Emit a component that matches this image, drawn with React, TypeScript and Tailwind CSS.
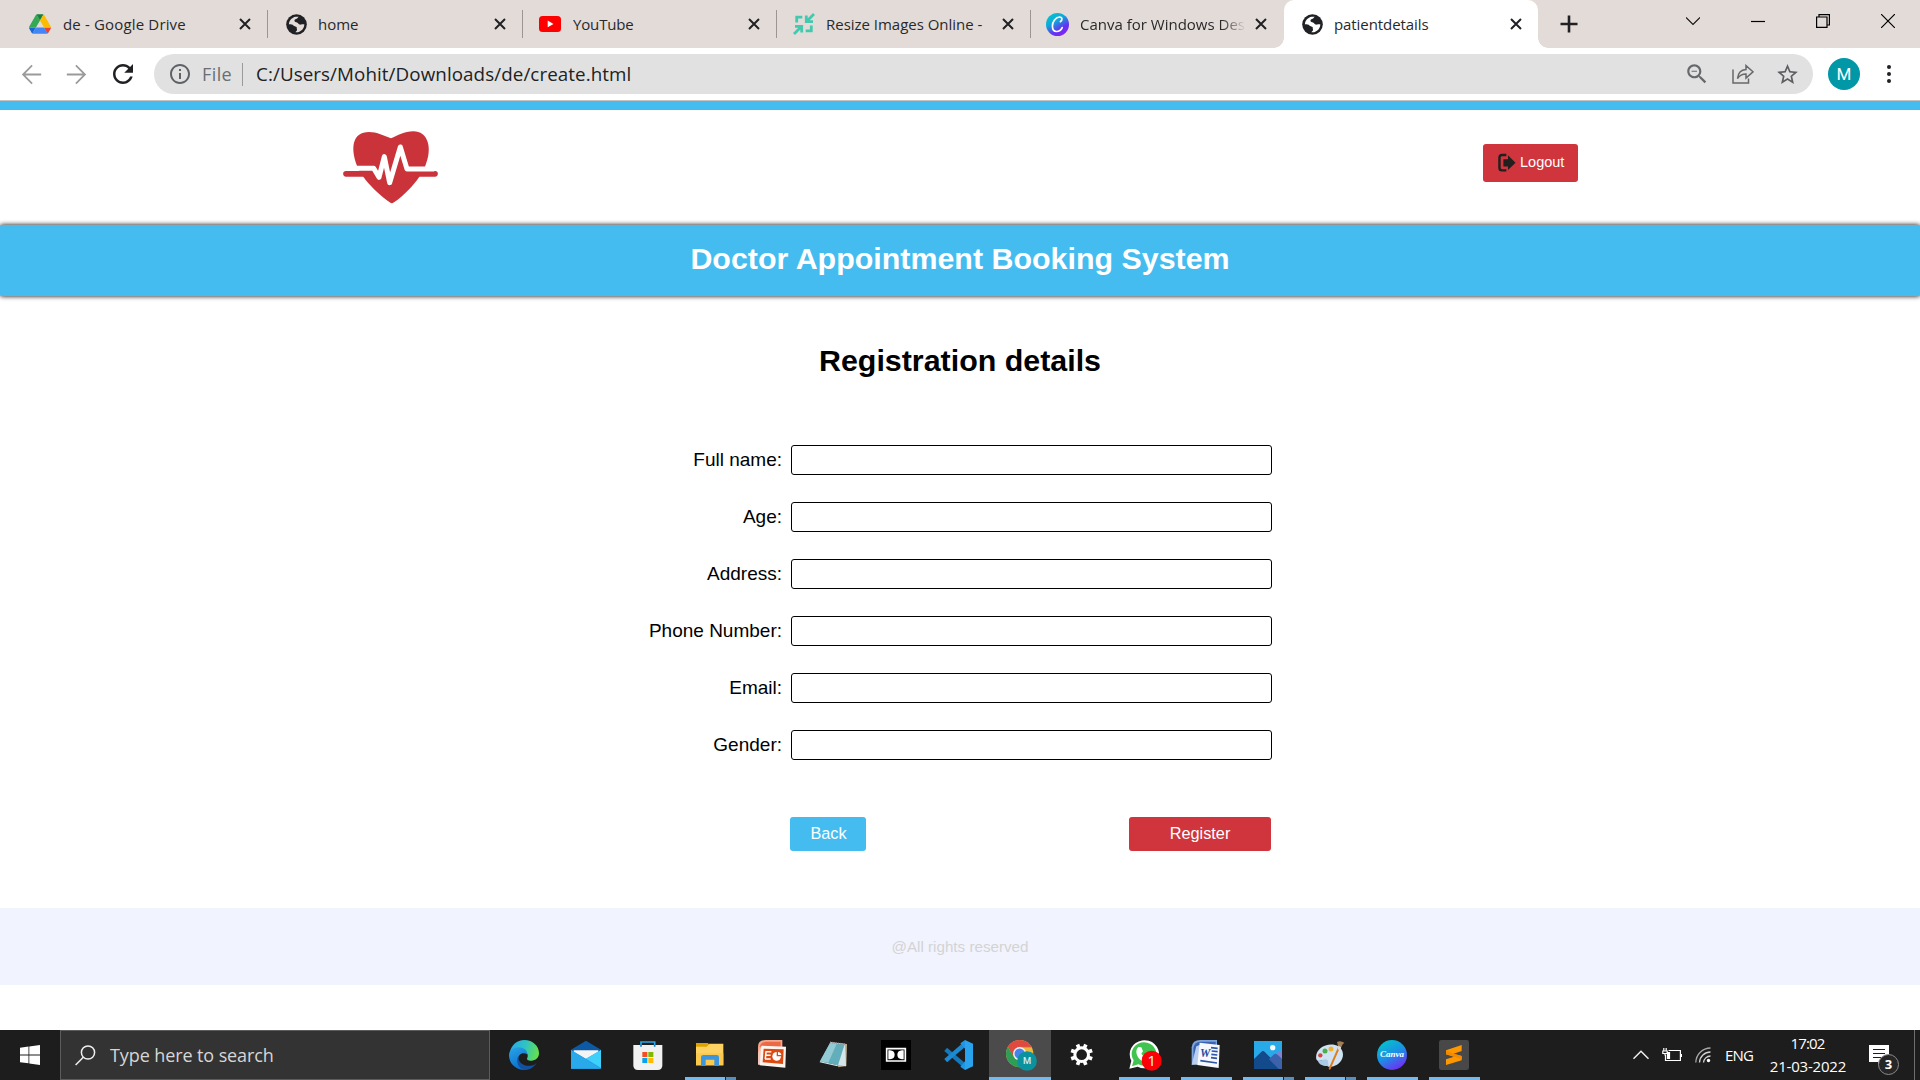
import React from 'react';
import type { ReactNode } from 'react';

const segoe = "font-['Open_Sans','Noto_Sans',sans-serif]";

function Mat({ d, size, className }: { d: string; size: number; className: string }) {
  return (
    <svg width={size} height={size} viewBox="0 0 24 24" className={className} fill="currentColor">
      <path d={d} />
    </svg>
  );
}

const BACK = 'M20 11.1H6.9l6.1-6.1L12 4l-8 8 8 8 1-1-6.1-6.1H20z';
const FORWARD = 'M4 11.1h13.1L11 5l1-1 8 8-8 8-1-1 6.1-6.1H4z';
const RELOAD =
  'M17.65 6.35C16.2 4.9 14.21 4 12 4c-4.42 0-7.99 3.58-7.99 8s3.57 8 7.99 8c3.73 0 6.84-2.55 7.73-6h-2.08c-.82 2.33-3.04 4-5.65 4-3.31 0-6-2.69-6-6s2.69-6 6-6c1.66 0 3.14.69 4.22 1.78L13 11h7V4l-2.35 2.35z';
const INFO =
  'M11 7h2v2h-2zm0 4h2v6h-2zm1-9C6.48 2 2 6.48 2 12s4.48 10 10 10 10-4.48 10-10S17.52 2 12 2zm0 18c-4.41 0-8-3.59-8-8s3.59-8 8-8 8 3.59 8 8-3.59 8-8 8z';
const ZOOM_OUT =
  'M15.5 14h-.79l-.28-.27C15.41 12.59 16 11.11 16 9.5 16 5.91 13.09 3 9.5 3S3 5.91 3 9.5 5.91 16 9.5 16c1.61 0 3.09-.59 4.23-1.57l.27.28v.79l5 4.99L20.49 19l-4.99-5zm-6 0C7.01 14 5 11.99 5 9.5S7.01 5 9.5 5 14 7.01 14 9.5 11.99 14 9.5 14zM7 9h5v1H7z';
const STAR =
  'M22 9.24l-7.19-.62L12 2 9.19 8.63 2 9.24l5.46 4.73L5.82 21 12 17.27 18.18 21l-1.63-7.03L22 9.24zM12 15.4l-3.76 2.27 1-4.28-3.32-2.88 4.38-.38L12 6.1l1.71 4.04 4.38.38-3.32 2.88 1 4.28L12 15.4z';

function Globe({ land }: { land: string }) {
  return (
    <svg width="21" height="21" viewBox="0 0 21 21">
      <circle cx="10.500" cy="10.500" r="10.300" fill="#202124" />
      <path d="M12.800 2.800c-1 .4-1.300 1.900-2.600 2.200-1.400.3-2 1.200-1.600 2.300.5 1.300 3 .9 3.700 2.200.5 1 1.700 1.400 2.900 1 .9-.3 1.900-.6 3.200.1-.2 3.600-2.500 6.400-5.600 7.500-.9.300-2.400.3-3.300.1.200-1 1.200-1 1.500-2 .2-.8-.4-1.400-.2-2.300.2-.9-.5-1.400-1.500-1.500-1.800-.1-2.100-1.600-3.700-1.800-1-.2-2-.3-2.700-.2.100-3.900 3.100-7 6.700-7.600 1.200-.2 2.200-.2 3.200 0z" fill={land} />
    </svg>
  );
}

function DriveIcon() {
  return (
    <svg width="22" height="20" viewBox="0 0 87.3 78">
      <path d="m6.6 66.85 3.85 6.65c.8 1.4 1.95 2.5 3.3 3.3l13.75-23.8h-27.5c0 1.55.4 3.1 1.2 4.5z" fill="#1967d2" />
      <path d="m43.65 25-13.75-23.8c-1.35.8-2.5 1.9-3.3 3.3l-25.4 44a9.06 9.06 0 0 0-1.2 4.5h27.5z" fill="#34a853" />
      <path d="m73.55 76.8c1.35-.8 2.5-1.9 3.3-3.3l1.6-2.75 7.65-13.25c.8-1.4 1.2-2.95 1.2-4.5h-27.5l5.85 11.5z" fill="#ea4335" />
      <path d="m43.65 25 13.75-23.8c-1.35-.8-2.9-1.2-4.5-1.2h-18.5c-1.6 0-3.15.45-4.5 1.2z" fill="#188038" />
      <path d="m59.8 53h-32.3l-13.75 23.8c1.35.8 2.9 1.2 4.5 1.2h50.8c1.6 0 3.15-.45 4.5-1.2z" fill="#4285f4" />
      <path d="m73.4 26.5-12.7-22c-.8-1.4-1.95-2.5-3.3-3.3l-13.75 23.8 16.15 28h27.45c0-1.55-.4-3.1-1.2-4.5z" fill="#fbbc04" />
    </svg>
  );
}

function YouTubeIcon() {
  return (
    <svg width="22" height="16" viewBox="0 0 22 16" className="-ml-[3px]">
      <rect width="22" height="16" rx="3.5" fill="#f00" />
      <path d="M8.7 4.6v6.6l5.8-3.3z" fill="#fff" />
    </svg>
  );
}

function ResizeIcon() {
  return (
    <svg width="22" height="22" viewBox="0 0 22 22" fill="none" stroke="#43c9b0" strokeWidth="2.800" className="-ml-[2px]">
      <path d="M3.700 9.500V4.200h5.600M18.300 12.500v5.300h-5.600" />
      <path d="M21 1l-7.500 7.500M13.300 2.500v6.200h6.700M1 21l7.500-7.500M2 13.300h6.700v6.200" />
    </svg>
  );
}

function CanvaTabIcon() {
  return (
    <svg width="23" height="23" viewBox="0 0 23 23" className="-ml-[3px]">
      <defs>
        <linearGradient id="canvaTab" x1="0.2" y1="0" x2="0.8" y2="1">
          <stop offset="0" stopColor="#00c4cc" />
          <stop offset="0.35" stopColor="#10a8da" />
          <stop offset="0.7" stopColor="#6432f0" />
          <stop offset="1" stopColor="#8a20f4" />
        </linearGradient>
      </defs>
      <circle cx="11.500" cy="11.500" r="11.500" fill="url(#canvaTab)" />
      <path
        d="M14.400 8.600c1.900-.8 2.300-4.600-.8-4.600-4 0-7.200 4.800-7.200 9 0 3.200 1.500 5.500 4.100 5.500 2.500 0 4.700-1.700 5.700-3.900"
        fill="none"
        stroke="#fff"
        strokeWidth="1.700"
        strokeLinecap="round"
      />
    </svg>
  );
}

function CloseX() {
  return (
    <svg width="12" height="12" viewBox="0 0 12 12" className="shrink-0" stroke="#202124" strokeWidth="2" fill="none">
      <path d="M1 1l10 10M11 1L1 11" />
    </svg>
  );
}

function Tab({ icon, title, width, fade, last, nudge }: { icon: ReactNode; title: string; width: string; fade?: boolean; last?: boolean; nudge?: string }) {
  return (
    <div className={`flex h-full shrink-0 items-center ${width}`}>
      <div className="ml-[17px] flex w-[22px] shrink-0 justify-center">{icon}</div>
      <div className={`relative w-[166px] overflow-hidden whitespace-nowrap text-[15px] leading-6 ${nudge ?? 'ml-[10px] tracking-[0.120px]'} text-[#29292b] ${fade ? 'mask-r-from-85% mask-r-to-100%' : ''}`}>
        {title}
      </div>
      <div className="ml-auto mr-4 flex">
        <CloseX />
      </div>
      <div className={`h-[28px] w-[1.5px] ${last ? '' : 'bg-[#9c9693]'}`} />
    </div>
  );
}

function TabStrip() {
  return (
    <div className="flex h-12 bg-[#e3dbd8] pl-3">
      <Tab icon={<DriveIcon />} title="de - Google Drive" width="w-[256px]" nudge="ml-[12px] tracking-[0.160px]" />
      <Tab icon={<Globe land="#e3dbd8" />} title="home" width="w-[255px]" nudge="ml-[11px]" />
      <Tab icon={<YouTubeIcon />} title="YouTube" width="w-[254px]" nudge="ml-[11px] tracking-[-0.150px]" />
      <Tab icon={<ResizeIcon />} title="Resize Images Online -" width="w-[254px]" nudge="ml-[10px] tracking-[-0.020px]" />
      <Tab icon={<CanvaTabIcon />} title="Canva for Windows Des" width="w-[253px]" nudge="ml-[10px]" fade last />
      <div className="relative h-12 w-[254px] rounded-t-[10px] bg-white">
        <Tab icon={<Globe land="#ffffff" />} title="patientdetails" width="w-[255px]" last nudge="ml-[11px] tracking-[-0.080px]" />
        <div className="absolute bottom-0 -left-2.5 size-2.5 bg-[radial-gradient(circle_at_0_0,transparent_9.5px,white_10px)]" />
        <div className="absolute bottom-0 -right-2.5 size-2.5 bg-[radial-gradient(circle_at_100%_0,transparent_9.5px,white_10px)]" />
      </div>
      <svg width="18" height="18" viewBox="0 0 18 18" className="ml-[22px] mt-[15px]" stroke="#202124" strokeWidth="2.6">
        <path d="M9 .5v17M.5 9h17" />
      </svg>
      <div className="ml-auto mr-[25px] flex h-[42px] items-center gap-[51px]">
        <svg width="14" height="14" viewBox="0 0 14 14" fill="none" stroke="#111" strokeWidth="1.100">
          <path d="M0 3.500l7 7 7-7" />
        </svg>
        <svg width="14" height="14" viewBox="0 0 14 14" stroke="#000" strokeWidth="1.200">
          <path d="M0 7.500h14" />
        </svg>
        <svg width="14" height="14" viewBox="0 0 14 14" fill="none" stroke="#000" strokeWidth="1.200">
          <path d="M.6 3h10.400v10.400H.6zM3 3V.6h10.400V11H11" />
        </svg>
        <svg width="14" height="14" viewBox="0 0 14 14" stroke="#000" strokeWidth="1.200">
          <path d="M0 0l14 14M14 0L0 14" />
        </svg>
      </div>
    </div>
  );
}

function Toolbar() {
  return (
    <div className="flex h-[53px] items-center border-b border-[#c6c3c1] bg-white pl-[17px]">
      <Mat d={BACK} size={29} className="text-[#9a9a9a]" />
      <Mat d={FORWARD} size={29} className="ml-4 text-[#9a9a9a]" />
      <Mat d={RELOAD} size={30} className="ml-[17px] text-[#202124]" />
      <div className="ml-4 flex h-10 w-[1659px] items-center rounded-full bg-[#e1e1e1] pl-[14px]">
        <Mat d={INFO} size={24} className="text-[#5f6368]" />
        <span className="ml-[10px] w-[30px] text-[18px] leading-6 tracking-[0.4px] text-[#6b6e72]">File</span>
        <div className="ml-[10px] h-[23px] w-px bg-[#9a9a9a]" />
        <span className="ml-[13px] whitespace-nowrap text-[18.800px] leading-6 tracking-[0.080px] text-[#202124]">C:/Users/Mohit/Downloads/de/create.html</span>
        <div className="ml-auto mr-[13px] flex items-center gap-[21px]">
          <Mat d={ZOOM_OUT} size={26} className="-ml-[3px] mr-[2px] text-[#66686b]" />
          <svg width="22" height="20" viewBox="0 0 22 20" fill="none" stroke="#66686b" strokeWidth="1.500" className="-ml-[1px]">
            <path d="M1 5.500V19h15.500v-4.500" />
            <path d="M5.500 14.500C6 9.500 9 6 14 5.600V1.600l7 6.200-7 6.200V10c-4 0-6.500 1.500-8.500 4.500z" />
          </svg>
          <Mat d={STAR} size={25} className="text-[#5c5e61]" />
        </div>
      </div>
      <div className="ml-[15px] flex size-8 items-center justify-center rounded-full bg-[#0097a7] text-[17px] leading-none text-white font-[Roboto,sans-serif]">
        M
      </div>
      <div className="ml-[27px] flex flex-col gap-[3px]">
        <i className="size-1 rounded-full bg-[#202124]" />
        <i className="size-1 rounded-full bg-[#202124]" />
        <i className="size-1 rounded-full bg-[#202124]" />
      </div>
    </div>
  );
}

function HeartLogo() {
  return (
    <svg width="95" height="73" viewBox="69 93 285 219">
      <path d="M111 197C90 142 98 96 147 96c24 0 45 11 66 19 20-8 40-21 67-21 43 0 60 48 35 106-4 10-10 20-17 30-18 27-46 56-76 77-6 4-7 4-13 0-30-22-62-52-79-77-8-10-15-22-19-33z" fill="#cb333b" />
      <path d="M78 221.500h267" stroke="#cb333b" strokeWidth="17" strokeLinecap="round" />
      <path d="M94 205h67l16 27 16-62 16 78 32-107 20 66h82" fill="none" stroke="#fff" strokeWidth="15" strokeLinejoin="round" />
    </svg>
  );
}

function Header() {
  return (
    <div className="flex h-[124px] justify-between border-t-[9px] border-[#45bcef] bg-white pl-[343px] pr-[342px]">
      <div className="pt-[21px]">
        <HeartLogo />
      </div>
      <button className="mt-[34px] flex h-[38px] w-[95px] items-center rounded-[3px] bg-[#d0343c] pb-px pl-[15px] text-[14.500px] text-white">
        <svg width="18" height="19" viewBox="594 158 54 58">
          <path d="M619 164h-13q-8 0-8 8v31q0 8 8 8h13" fill="none" stroke="#231f1f" strokeWidth="7.500" />
          <path d="M610 177h14v-12l23 23-23 22v-11h-14z" fill="#231f1f" />
        </svg>
        <span className="ml-[4px]">Logout</span>
      </button>
    </div>
  );
}

const FIELDS = ['Full name:', 'Age:', 'Address:', 'Phone Number:', 'Email:', 'Gender:'];

function Page() {
  return (
    <div className="flex h-[929px] flex-col bg-white font-['Liberation_Sans',Arial,sans-serif] text-black">
      <Header />
      <div className="z-10 flex h-[71px] items-center justify-center rounded-[2px] bg-[#45bcef] pb-[4px] text-[30.400px] font-bold text-white shadow-[0_0_5px_#000]">
        <h1 className="leading-none">Doctor Appointment Booking System</h1>
      </div>
      <h2 className="mt-[49px] text-center text-[30.400px] font-bold leading-[31px]">Registration details</h2>
      <form className="mt-[69px] flex flex-col gap-[27px]">
        {FIELDS.map((f) => (
          <label key={f} className="flex h-[30px] items-center">
            <span className="w-[782px] text-right text-[19px] leading-[32px]">{f}</span>
            <input className="ml-[9px] h-[30px] w-[481px] rounded-[3px] border-[1.500px] border-black bg-white" />
          </label>
        ))}
      </form>
      <div className="ml-[790px] mt-[57px] flex w-[481px] justify-between text-[16.300px] text-white">
        <button className="h-[34px] w-[76px] rounded-[3px] bg-[#45bcef] pb-px pl-px">Back</button>
        <button className="h-[34px] w-[142px] rounded-[3px] bg-[#d0343c] pb-px">Register</button>
      </div>
      <footer className="mt-[57px] flex h-[77px] items-center justify-center bg-[#f1f3fe] pt-px text-[15.200px] text-[#d3d3d3]">@All rights reserved</footer>
    </div>
  );
}

function Ico({ children }: { children: ReactNode }) {
  return (
    <svg width="30" height="30" viewBox="0 0 90 90">
      {children}
    </svg>
  );
}

const edge = (
  <Ico>
    <defs>
      <linearGradient id="edgeTop" x1="0" y1="0.3" x2="1" y2="0.5">
        <stop offset="0" stopColor="#2aa9e8" />
        <stop offset="0.5" stopColor="#2fc3c4" />
        <stop offset="1" stopColor="#66e04a" />
      </linearGradient>
      <linearGradient id="edgeLeft" x1="0" y1="0" x2="0.4" y2="1">
        <stop offset="0" stopColor="#2aa5e6" />
        <stop offset="1" stopColor="#0b6fd0" />
      </linearGradient>
    </defs>
    <path d="M2 40C6 15 24 0 46 0c25 0 44 18 44 39 0 14-10 23-23 23-10 0-15-4-12-9 3-6 1-14-6-18C34 27 10 32 2 40z" fill="url(#edgeTop)" />
    <path d="M0 46c0-16 14-24 28-24 16 0 27 9 27 21-14-9-28 0-28 15 0 14 10 25 24 32C22 92 0 72 0 46z" fill="url(#edgeLeft)" />
    <path d="M29 47c-4 21 17 33 37 30 8-1 13-5 17-9-8 14-22 22-36 22-18-3-29-27-18-43z" fill="#11529e" />
  </Ico>
);

const mail = (
  <Ico>
    <path d="M0 29L45 2l45 27v12H0z" fill="#0c59a4" />
    <path d="M8 31h74v20L45 70 8 51z" fill="#f4f4f4" />
    <path d="M0 30l45 26 45-26v56H0z" fill="#1f9be6" />
    <path d="M90 30L45 56l45 28z" fill="#3fd0fa" />
    <path d="M0 30l90 56H0z" fill="#29a9ea" />
  </Ico>
);

const store = (
  <Ico>
    <path d="M24 18V6h41v12" fill="none" stroke="#2aa8ea" strokeWidth="5" />
    <path d="M1 15h87v61q0 14-14 14H15Q1 90 1 76z" fill="#f1f1f1" />
    <path d="M24 20v-6M65 20v-6" stroke="#1b7fc4" strokeWidth="5" />
    <path d="M28 36h15v15H28z" fill="#f25022" />
    <path d="M46 36h15v15H46z" fill="#7fba00" />
    <path d="M28 54h15v15H28z" fill="#00a4ef" />
    <path d="M46 54h15v15H46z" fill="#ffb900" />
  </Ico>
);

const explorer = (
  <Ico>
    <path d="M3 9h36l4 6v10H3z" fill="#e0a100" />
    <path d="M3 20h32l8-9h42v65H3z" fill="#fdd263" />
    <path d="M3 40h82v36H3z" fill="#fbc94d" />
    <path d="M18 78V52q0-7 7-7h40q7 0 7 7v26H58V59H32v19z" fill="#3b96dd" />
  </Ico>
);

const powerpoint = (
  <Ico>
    <path d="M3 20Q3 0 26 0h50v60H3z" fill="#f7a58c" />
    <path d="M8 22Q10 6 28 5h43v15H8z" fill="#e4572e" opacity="0.75" />
    <path d="M3 40l6-15 30-6-15 55H3z" fill="#f5c4b5" />
    <path d="M13 17l74 3-2 63-77-7z" fill="#fdf3ef" />
    <path d="M20 26l60 2-2 44-61-5z" fill="#dc4a12" />
    <path d="M26 35h17M26 46h15M24 57h17M27 35l-2 22" stroke="#fff" strokeWidth="4.500" />
    <circle cx="59" cy="49" r="13" fill="#fff" />
    <path d="M59 49V34q14 1 15 15z" fill="#dc4a12" />
    <path d="M63 45v-9q9 1 10 9z" fill="#fff" />
  </Ico>
);

const notepad = (
  <Ico>
    <path d="M34 6l50 6-2 66-24 4z" fill="#b9a98a" />
    <path d="M33 7l45 5 3 67-30-5z" fill="#d4e6ea" />
    <path d="M33 9L3 64l54 12 20-63z" fill="#63aebb" />
    <path d="M33 9l20 2L28 68 3 64z" fill="#93cbd4" />
    <path d="M3 64l54 12-2 3L2 67z" fill="#cfe6ea" />
    <path d="M33 7l46 6" stroke="#999" strokeWidth="5" strokeDasharray="3 3" />
  </Ico>
);

const dolby = (
  <Ico>
    <path d="M0 0h90v90H0z" fill="#000" />
    <path d="M17 26h56v37H17z" fill="none" stroke="#fff" strokeWidth="5" />
    <path d="M22 31h5q14 1 14 13.500T27 58h-5zM68 31h-5q-14 1-14 13.500T63 58h5z" fill="#fff" />
  </Ico>
);

const vscode = (
  <Ico>
    <path d="M8 28L66 78" stroke="#1478bb" strokeWidth="13" />
    <path d="M8 62L66 12" stroke="#1b8ad2" strokeWidth="13" />
    <path d="M66 0l24 11v68L66 90z" fill="#2aa3ee" />
    <path d="M66 0L52 10l14 16zM66 90L52 80l14-16z" fill="#2196e3" />
  </Ico>
);

const chrome = (
  <svg width="32" height="32" viewBox="0 0 96 96" className="ml-[3px]">
    <circle cx="41" cy="44" r="41" fill="#e8b93c" />
    <path d="M41 3a41 41 0 0 1 35.500 20.500H41L23 54 5.500 23.500A41 41 0 0 1 41 3z" fill="#de4a40" />
    <path d="M5.500 23.500L24 54l17 10-2 21A41 41 0 0 1 5.500 23.500z" fill="#2e9d56" />
    <path d="M41 23.500h35.500" stroke="#de4a40" strokeWidth="3" />
    <circle cx="41" cy="44" r="20" fill="#f0f0f0" />
    <circle cx="41" cy="44" r="15.500" fill="#4683ec" />
    <circle cx="63" cy="66" r="29.500" fill="#0b929f" />
    <text x="63" y="76" textAnchor="middle" fontSize="28" fontWeight="500" fill="#d7eff1" fontFamily="Roboto, sans-serif">
      M
    </text>
  </svg>
);

const settings = (
  <Ico>
    <circle cx="44" cy="44" r="20.500" fill="none" stroke="#fff" strokeWidth="9" />
    <g stroke="#fff" strokeWidth="11">
      <path d="M35.500 23.500l-4-10M52.500 23.500l4-10M35.500 64.500l-4 10M52.500 64.500l4 10M23.500 35.500l-11-4M23.500 52.500l-11 4M64.500 35.500l11-4M64.500 52.500l11 4" />
    </g>
  </Ico>
);

const whatsapp = (
  <svg width="34" height="32" viewBox="0 0 102 96" className="ml-[2px]">
    <path d="M4 89l6-24A44 42 0 1 1 29 83z" fill="#fff" />
    <path d="M12 82l5-18A37 35 0 1 1 31 76z" fill="#41c351" />
    <path d="M31 24l9 1 5 12-5 7q6 10 17 15l7-6 10 7q-3 14-16 13C40 70 24 54 25 36q1-8 6-12z" fill="#fff" />
    <circle cx="71" cy="65" r="30" fill="#fb0007" />
    <text x="71" y="81" textAnchor="middle" fontSize="44" fill="#fff" fontFamily="Open Sans, sans-serif">
      1
    </text>
  </svg>
);

const word = (
  <Ico>
    <path d="M2 22Q4 0 28 0h50v60L2 74z" fill="#7da4dc" />
    <path d="M7 24Q10 6 28 5h46v50L8 66z" fill="#3b63b4" />
    <path d="M2 74l14-55 20-8-6 63z" fill="#b8cdef" />
    <path d="M26 8l60 7-3 69-64-9z" fill="#f6f8fd" />
    <path d="M60 23l20 2M62 33l18 2M61 43l18 2M60 53l18 2M28 62l50 7" stroke="#2d55a8" strokeWidth="5" />
    <text x="27" y="51" fontSize="35" fontWeight="700" fontStyle="italic" fill="#244a9d" fontFamily="Liberation Serif, serif">
      W
    </text>
  </Ico>
);

const photos = (
  <Ico>
    <path d="M3 3h84v84H3z" fill="#29aae8" />
    <path d="M87 46L68 42 42 66v21h45z" fill="#5d6fc4" />
    <path d="M87 56L70 40l17-10z" fill="#7f83d8" />
    <path d="M3 57l24-23q3-2 6 0l54 53H3z" fill="#124a8c" />
    <path d="M48 58l15-15q4-3 8 0l16 15v29H77z" fill="#3c62ac" />
    <circle cx="59" cy="23" r="8" fill="#f6fbff" />
  </Ico>
);

const paint = (
  <Ico>
    <path d="M4 58C-2 30 30 8 60 15c20 5 28 22 22 40-7 20-30 28-42 25-9-3 2-14-8-19-9-4-23 9-28-3z" fill="#cfe3f2" />
    <path d="M8 60c10 6 18-7 28-1 7 5 0 17 8 19-22 2-34-6-36-18z" fill="#a9cbe4" />
    <circle cx="16" cy="46" r="6.500" fill="#d9443c" />
    <circle cx="30" cy="33" r="7.500" fill="#4fae4c" />
    <circle cx="48" cy="27" r="7.500" fill="#f2b134" />
    <path d="M72 22L44 86" stroke="#e07b1f" strokeWidth="6" strokeLinecap="round" />
    <path d="M66 6q10-6 22 2-6 4-9 13l-10-3z" fill="#a57d53" />
    <path d="M70 17l9 4-5 10-6-3z" fill="#ddd" />
  </Ico>
);

const canva = (
  <Ico>
    <defs>
      <linearGradient id="canvaBar" x1="0.2" y1="0" x2="0.750" y2="1">
        <stop offset="0" stopColor="#04c5ca" />
        <stop offset="0.500" stopColor="#1a8fe6" />
        <stop offset="1" stopColor="#7826f5" />
      </linearGradient>
    </defs>
    <circle cx="45" cy="45" r="45" fill="url(#canvaBar)" />
    <text x="45" y="52" textAnchor="middle" fontSize="26" fontStyle="italic" fontWeight="700" fill="#fff" fontFamily="Liberation Serif, serif" textLength="72" lengthAdjust="spacingAndGlyphs">
      Canva
    </text>
  </Ico>
);

const sublime = (
  <Ico>
    <rect width="90" height="90" rx="7" fill="#484848" />
    <path d="M21 31l47-16v18l-24 8 24 7v13L21 75V58l24-8-24-7z" fill="#ff9800" />
    <path d="M21 31l23 10 24 7v10L45 50l-24-7z" fill="#f48a00" />
  </Ico>
);

type AppEntry = { name: string; icon: ReactNode; state: 'idle' | 'open' | 'multi' | 'active' };
const APPS: AppEntry[] = [
  { name: 'edge', icon: edge, state: 'idle' },
  { name: 'mail', icon: mail, state: 'idle' },
  { name: 'store', icon: store, state: 'idle' },
  { name: 'explorer', icon: explorer, state: 'multi' },
  { name: 'powerpoint', icon: powerpoint, state: 'idle' },
  { name: 'notepad', icon: notepad, state: 'idle' },
  { name: 'dolby', icon: dolby, state: 'idle' },
  { name: 'vscode', icon: vscode, state: 'idle' },
  { name: 'chrome', icon: chrome, state: 'active' },
  { name: 'settings', icon: settings, state: 'idle' },
  { name: 'whatsapp', icon: whatsapp, state: 'open' },
  { name: 'word', icon: word, state: 'open' },
  { name: 'photos', icon: photos, state: 'multi' },
  { name: 'paint', icon: paint, state: 'multi' },
  { name: 'canva', icon: canva, state: 'open' },
  { name: 'sublime', icon: sublime, state: 'open' },
];

function Underline({ state }: { state: AppEntry['state'] }) {
  if (state === 'active') return <div className="h-[3px] w-full bg-[#76b9ed]" />;
  if (state === 'open') return <div className="h-[3px] w-[51px] bg-[#76b9ed]" />;
  if (state === 'multi')
    return (
      <div className="flex h-[3px] w-[51px]">
        <div className="w-10 bg-[#76b9ed]" />
        <div className="ml-px w-2.5 bg-[#5a8fbb]" />
      </div>
    );
  return <div className="h-[3px]" />;
}

function Taskbar() {
  return (
    <div className="flex h-[50px] bg-[#1d1d1d] text-white">
      <div className="flex w-[60px] items-center justify-center">
        <svg width="20" height="20" viewBox="0 0 20 20" fill="#fff">
          <path d="M0 2.800L8.500 1.600v7.800H0zM9.300 1.500L20 0v9.400H9.300zM0 10.400h8.500v7.900L0 17.200zM9.300 10.400H20V20L9.300 18.500z" />
        </svg>
      </div>
      <div className="flex w-[430px] items-center border border-[#5c5c5c] bg-[#333]">
        <svg width="21" height="21" viewBox="0 0 21 21" fill="none" stroke="#f0f0f0" strokeWidth="1.500" className="ml-[14px]">
          <circle cx="13" cy="7.500" r="6.600" />
          <path d="M8.300 12.300L.6 20" />
        </svg>
        <span className="ml-[14px] text-[18px] leading-6 tracking-[-0.1px] text-[#d6d6d6]">Type here to search</span>
      </div>
      <div className="ml-[3px] flex">
        {APPS.map((a) => (
          <div key={a.name} className={`flex w-[62px] flex-col items-center justify-end ${a.state === 'active' ? 'bg-[#4b4b4b]' : ''}`}>
            <div className="flex flex-1 items-center justify-center pt-[3px]">{a.icon}</div>
            <Underline state={a.state} />
          </div>
        ))}
      </div>
      <div className="ml-auto flex items-center">
        <svg width="16" height="10" viewBox="0 0 16 10" fill="none" stroke="#f2f2f2" strokeWidth="1.400">
          <path d="M.5 8.800L8 1.200l7.500 7.600" />
        </svg>
        <svg width="20" height="14" viewBox="0 0 20 14" fill="none" stroke="#fff" strokeWidth="1.200" className="ml-[13px]">
          <path d="M6.500 2.500H18.400v10H3.500V7M19.400 6v3M1.800 0v3M4.200 0v3M.8 3h4.400v2.500H.8zM3 5.500v2" />
          <path d="M5.500 4.500h2v6h-2z" fill="#fff" />
        </svg>
        <svg width="16" height="16" viewBox="0 0 16 16" fill="none" strokeWidth="1.300" className="ml-[13px]">
          <path d="M.8 15.500A15 15 0 0 1 15.500 1" stroke="#a9a9a9" />
          <path d="M4.500 15.500A11 11 0 0 1 15.500 5M8.500 15.500a7 7 0 0 1 7-6.500" stroke="#d2d2d2" />
          <circle cx="13.500" cy="13.500" r="1.700" fill="#fff" />
        </svg>
        <span className="ml-[14px] w-[29px] text-[15px] leading-5 tracking-[-0.8px]">ENG</span>
        <div className="ml-[13px] flex w-[82px] flex-col items-center text-[15px]">
          <span className="-ml-px leading-[23px] tracking-[-0.8px]">17:02</span>
          <span className="leading-[23px] tracking-[-0.2px]">21-03-2022</span>
        </div>
        <div className="relative ml-5 h-[50px] w-[45px]">
          <svg width="20" height="20" viewBox="0 0 20 20" className="mt-[15px]">
            <path d="M0 0h20v17h-8l-3 3v-3H0z" fill="#fff" />
            <path d="M4 4.500h12M4 8.500h12M4 12.500h8" stroke="#1d1d1d" strokeWidth="1.200" />
          </svg>
          <div className="absolute left-[9px] top-6 flex size-[21px] items-center justify-center rounded-full border border-[#8b8b8b] bg-[#262626] text-[13px] font-bold leading-none">3</div>
        </div>
        <div className="mr-[5px] h-[50px] w-px bg-[#6e6e6e]" />
      </div>
    </div>
  );
}

export default function App() {
  return (
    <div className={`flex h-[1080px] w-[1920px] flex-col overflow-hidden bg-white ${segoe}`}>
      <TabStrip />
      <Toolbar />
      <Page />
      <Taskbar />
    </div>
  );
}
